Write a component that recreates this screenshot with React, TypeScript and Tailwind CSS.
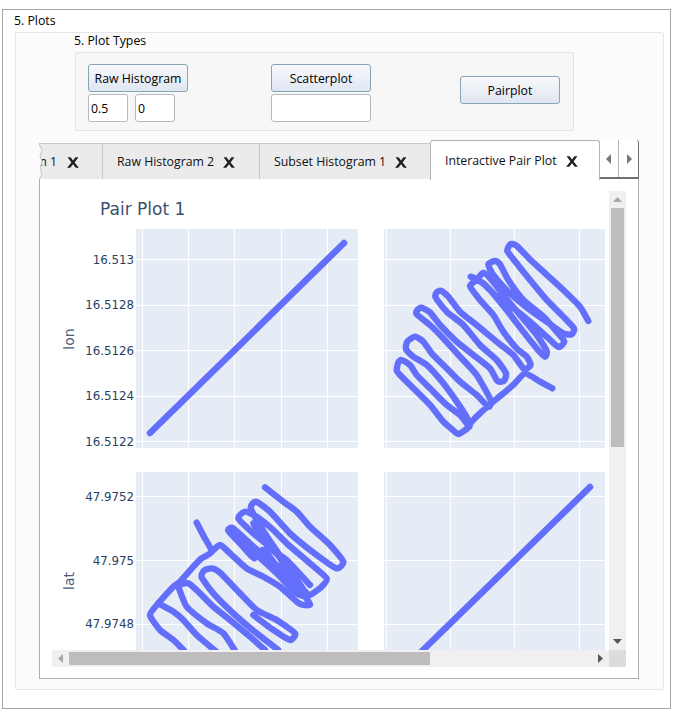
import React from "react";

const INK = "#636efa";

type Pt = [number, number];

// Points traced from the picture, smoothed into curves when drawn
const plot2: Pt[] = [
  [517, 490], [480, 470], [435, 445], [400, 480], [340, 530], [300, 565], [275, 590], [262, 610], [235, 627], [215, 612], [190, 590], [150, 540], [100, 490], [60, 450], [50, 437], [55, 412], [65, 405], [90, 420], [110, 450], [150, 490], [200, 540], [240, 570], [268, 605], [262, 580], [230, 530], [190, 475], [140, 420], [100, 395], [78, 372], [82, 350], [105, 335], [130, 350], [155, 385], [200, 430], [240, 470], [290, 510], [325, 545], [332, 525], [290, 450], [240, 395], [190, 340], [150, 300], [110, 268], [112, 255], [125, 248], [150, 262], [180, 300], [230, 350], [280, 390], [330, 430], [352, 468], [372, 468], [378, 445], [350, 405], [300, 360], [250, 300], [200, 260], [167, 218], [170, 202], [183, 197], [205, 215], [240, 260], [290, 300], [350, 350], [400, 390], [432, 432], [452, 420], [440, 395], [410, 370], [370, 320], [340, 270], [300, 225], [270, 183], [290, 165], [310, 143], [335, 165], [370, 210], [420, 270], [470, 330], [500, 378], [495, 395], [470, 370], [430, 320], [380, 255], [330, 195], [295, 165], [272, 155], [310, 175], [350, 215], [400, 250], [450, 290], [500, 335], [535, 366], [553, 350], [530, 320], [490, 275], [430, 225], [385, 165], [360, 118], [345, 108], [325, 118], [340, 150], [390, 205], [450, 255], [500, 290], [550, 325], [575, 328], [582, 310], [550, 275], [500, 225], [450, 165], [410, 115], [382, 78], [392, 57], [410, 62], [445, 98], [490, 140], [550, 195], [600, 245], [625, 288],
];

const plot3: Pt[][] = [
  [[200, 158], [222, 200], [245, 245], [215, 265], [190, 290], [150, 335], [130, 350], [85, 400], [60, 435], [90, 480], [130, 510], [170, 550]],
  [[85, 400], [130, 425], [160, 450], [200, 495], [265, 550]],
  [[145, 345], [175, 340], [210, 370], [250, 410], [300, 450], [360, 500], [405, 540]],
  [[145, 350], [170, 410], [230, 460], [280, 490], [320, 550]],
  [[445, 540], [380, 490], [310, 430], [250, 370], [215, 322], [222, 302], [245, 295], [270, 308], [330, 370], [380, 420], [440, 450], [495, 490], [480, 510], [430, 480], [370, 435]],
  [[245, 245], [270, 225], [300, 250], [350, 295], [400, 320], [450, 350], [500, 395], [520, 405], [540, 403], [510, 360], [450, 300], [400, 240], [372, 265], [330, 220], [295, 182], [310, 175], [370, 230], [420, 270], [470, 310], [520, 360], [540, 375], [575, 350], [590, 325], [540, 280], [470, 220], [430, 180], [380, 140], [345, 125], [325, 145], [370, 190], [430, 240], [470, 290], [510, 350], [530, 385], [490, 330], [430, 230], [380, 150], [362, 112], [378, 95], [420, 125], [480, 190], [560, 255], [620, 295], [640, 275], [600, 225], [540, 170], [500, 125], [460, 95], [405, 52]],
  [[320, 205], [380, 255], [440, 310], [500, 370], [530, 375], [480, 300], [410, 200], [370, 160], [420, 235], [470, 270], [540, 345]],
];

function smooth(pts: Pt[]) {
  let d = `M${pts[0][0]} ${pts[0][1]}`;
  for (let i = 0; i < pts.length - 1; i++) {
    const a = pts[Math.max(i - 1, 0)];
    const b = pts[i];
    const c = pts[i + 1];
    const e = pts[Math.min(i + 2, pts.length - 1)];
    const c1x = b[0] + (c[0] - a[0]) / 10;
    const c1y = b[1] + (c[1] - a[1]) / 10;
    const c2x = c[0] - (e[0] - b[0]) / 10;
    const c2y = c[1] - (e[1] - b[1]) / 10;
    d += `C${c1x} ${c1y} ${c2x} ${c2y} ${c[0]} ${c[1]}`;
  }
  return d;
}

const xTicks1 = [142, 188, 234, 281, 327];
const xTicks2 = [386, 450, 514, 579];
const yTicks1 = [259, 305, 350, 396, 441];
const yTicks2 = [496, 560, 624];

function Subplot({ x, y, w, h, xs, ys }: { x: number; y: number; w: number; h: number; xs: number[]; ys: number[] }) {
  return (
    <g>
      <rect x={x} y={y} width={w} height={h} fill="#e5ecf6" />
      {xs.map((t) => (
        <line key={t} x1={t + 0.5} x2={t + 0.5} y1={y} y2={y + h} stroke="#fff" strokeWidth="1" />
      ))}
      {ys.map((t) => (
        <line key={t} x1={x} x2={x + w} y1={t + 0.5} y2={t + 0.5} stroke="#fff" strokeWidth="1" />
      ))}
    </g>
  );
}

function PairPlot() {
  return (
    <svg viewBox="52 191 557 459" className="block w-[557px] h-[459px]" style={{ fontFamily: '"DejaVu Sans", sans-serif' }}>
      <rect x="52" y="191" width="557" height="459" fill="#fff" />
      <text x="100" y="214.5" fontSize="17" fill="#3b4f6e">
        Pair Plot 1
      </text>

      <Subplot x={136} y={229} w={222} h={219} xs={xTicks1} ys={yTicks1} />
      <Subplot x={384} y={229} w={221} h={219} xs={xTicks2} ys={yTicks1} />
      <Subplot x={136} y={472} w={222} h={178} xs={xTicks1} ys={yTicks2} />
      <Subplot x={384} y={472} w={221} h={178} xs={xTicks2} ys={yTicks2} />

      <g fontSize="11.8" fill="#2a3f5f" textAnchor="end">
        <text x="134" y="264">16.513</text>
        <text x="134" y="309">16.5128</text>
        <text x="134" y="355">16.5126</text>
        <text x="134" y="400">16.5124</text>
        <text x="134" y="446">16.5122</text>
        <text x="134" y="501">47.9752</text>
        <text x="134" y="565">47.975</text>
        <text x="134" y="628">47.9748</text>
      </g>
      <text transform="translate(74 339) rotate(-90)" fontSize="14" fill="#4a5d7c" textAnchor="middle">
        lon
      </text>
      <text transform="translate(74 581) rotate(-90)" fontSize="14" fill="#4a5d7c" textAnchor="middle">
        lat
      </text>

      <g fill="none" stroke={INK} strokeLinecap="round" strokeLinejoin="round">
        <path d="M150 433L344 243" strokeWidth="6.5" />
        <path d="M590 487L421 652" strokeWidth="6.5" />
        <path d={smooth(plot2)} strokeWidth="19" transform="translate(380 225) scale(0.3333)" />
        {plot3.map((pts, i) => (
          <path key={i} d={smooth(pts)} strokeWidth="19" transform="translate(130 470) scale(0.3333)" />
        ))}
      </g>
    </svg>
  );
}

function CloseX() {
  return (
    <svg viewBox="0 0 12 11" className="w-[12px] h-[11px] shrink-0">
      <path d="M0.6 0.2H3.6L6 3.6L8.4 0.2H11.4L7.6 5.4L11.9 10.8H8.7L6 7.2L3.3 10.8H0.1L4.4 5.4Z" fill="#222" />
    </svg>
  );
}

function Btn({ label, className }: { label: string; className?: string }) {
  return (
    <button className={"w-[100px] h-[28px] pt-[2px] rounded-[3px] border border-[#86a6b5] bg-gradient-to-b from-[#f8f9fb] to-[#dfe5f2] text-black " + (className ?? "")}>
      {label}
    </button>
  );
}

function Field({ value, className }: { value?: string; className: string }) {
  return (
    <div className={"h-[28px] rounded-[3px] border border-[#b8b8b8] bg-white px-[2px] leading-[28px] text-black " + className}>
      {value}
    </div>
  );
}

function Tab({ label, className }: { label: string; className: string }) {
  return (
    <div className={"h-[36px] flex items-center gap-[9px] pl-[14px] pt-[2px] border-l border-t border-[#c8c8c8] bg-[#ebebeb] text-[#111] " + className}>
      <span>{label}</span>
      <CloseX />
    </div>
  );
}

export default function App() {
  return (
    <div className="w-[676px] h-[712px] bg-white pt-[9px] pl-[2px] text-[12.3px]" style={{ fontFamily: '"Open Sans", "Noto Sans", sans-serif' }}>
      <div className="w-[669px] h-[700px] border border-[#a6a6a6]">
        <div className="h-[22px] pl-[11px] leading-[22px] text-black">5. Plots</div>

        <div className="ml-[12px] w-[649px] h-[658px] rounded-[2px] border border-[#e6e6e6] bg-[#fbfbfb]">
          <div className="h-[19px] pl-[58px] leading-[16px] text-black">5. Plot Types</div>

          <div className="ml-[59px] w-[499px] h-[79px] rounded-[2px] border border-[#e4e4e4] bg-[#f7f7f7] flex pl-[12px] pt-[11px]">
            <div className="w-[183px]">
              <Btn label="Raw Histogram" />
              <div className="flex gap-[7px] mt-[2px]">
                <Field value="0.5" className="w-[40px]" />
                <Field value="0" className="w-[40px]" />
              </div>
            </div>
            <div className="w-[189px]">
              <Btn label="Scatterplot" />
              <Field className="w-[100px] mt-[2px]" />
            </div>
            <Btn label="Pairplot" className="mt-[12px]" />
          </div>

          <div className="ml-[23px] mt-[9px] w-[600px]">
            <div className="flex items-end h-[39px]">
              <div className="relative w-[63px] h-[36px] overflow-hidden flex items-center justify-end gap-[10px] pr-[23px] pt-[2px] border-t border-[#c8c8c8] bg-[#ebebeb] text-[#111]">
                <span className="whitespace-nowrap">m 1</span>
                <CloseX />
                <svg viewBox="0 0 5 36" className="absolute left-0 top-0 w-[5px] h-[36px]">
                  <path d="M0 0L3 6L1 12L3 18L1 24L3 30L0 36Z" fill="#fbfbfb" />
                  <path d="M0 0L3 6L1 12L3 18L1 24L3 30L0 36" fill="none" stroke="#c4c4c4" />
                </svg>
              </div>
              <Tab label="Raw Histogram 2" className="w-[157px]" />
              <Tab label="Subset Histogram 1" className="w-[171px]" />
              <div className="relative z-10 -mb-[1px] w-[170px] h-[40px] rounded-t-[3px] border border-b-0 border-[#b4b4b4] bg-white flex items-center gap-[9px] pl-[14px] pt-[1px] text-[#111]">
                <span>Interactive Pair Plot</span>
                <CloseX />
              </div>
              <div className="w-[39px] h-[39px] flex border-b-2 border-r border-[#707070] rounded-tr-[3px] bg-white">
                <div className="w-[19px] flex items-center justify-center border-r border-[#b4b4b4]">
                  <svg viewBox="0 0 6 10" className="w-[6px] h-[10px]">
                    <path d="M5 0V10L0 5Z" fill="#777" />
                  </svg>
                </div>
                <div className="flex-1 flex items-center justify-center">
                  <svg viewBox="0 0 6 10" className="w-[6px] h-[10px]">
                    <path d="M1 0V10L6 5Z" fill="#777" />
                  </svg>
                </div>
              </div>
            </div>

            <div className="w-[600px] h-[500px] border border-t-0 border-[#aeaeae] bg-white pl-[12px] pt-[12px]">
              <div className="grid grid-cols-[557px_17px] grid-rows-[459px_17px] w-[574px] h-[476px]">
                <PairPlot />
                <div className="relative bg-[#f0f0f0]">
                  <svg viewBox="0 0 9 6" className="absolute left-[4px] top-[6px] w-[9px] h-[6px]">
                    <path d="M0 5H9L4.5 0Z" fill="#a8a8a8" />
                  </svg>
                  <div className="absolute left-[2px] top-[17px] w-[13px] h-[239px] bg-[#bdbdbd]" />
                  <svg viewBox="0 0 9 6" className="absolute left-[4px] bottom-[6px] w-[9px] h-[6px]">
                    <path d="M0 1H9L4.5 6Z" fill="#555" />
                  </svg>
                </div>
                <div className="relative bg-[#f0f0f0]">
                  <svg viewBox="0 0 6 9" className="absolute left-[6px] top-[4px] w-[6px] h-[9px]">
                    <path d="M5 0V9L0 4.5Z" fill="#a8a8a8" />
                  </svg>
                  <div className="absolute left-[17px] top-[2px] w-[361px] h-[13px] bg-[#bdbdbd]" />
                  <svg viewBox="0 0 6 9" className="absolute right-[6px] top-[4px] w-[6px] h-[9px]">
                    <path d="M1 0V9L6 4.5Z" fill="#555" />
                  </svg>
                </div>
                <div className="bg-[#dcdcdc]" />
              </div>
            </div>
          </div>
        </div>
      </div>
    </div>
  );
}
